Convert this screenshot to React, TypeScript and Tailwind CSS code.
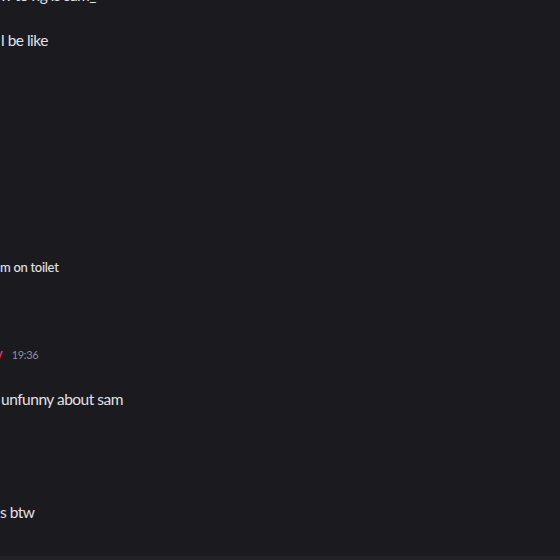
export default function App() {
  return (
    <div className="flex h-[560px] w-[560px] flex-col overflow-hidden bg-[#1b1a1f] font-['Lato',sans-serif] text-[#e0e1e5]">
      <div className="flex-1 overflow-hidden">
        <div className="-mt-4 text-[15.5px] leading-[22px] tracking-[-0.5px] whitespace-nowrap">w to ng is sam_</div>
        <div className="mt-[23px] pl-px text-[15.5px] leading-[22px] tracking-[-0.5px] whitespace-nowrap">l be like</div>
        <div className="mt-[206px] text-[13px] font-medium leading-[20px] tracking-[-0.3px] whitespace-nowrap">m on toilet</div>
        <div className="mt-[68px] flex items-baseline whitespace-nowrap leading-[16px]">
          <span className="-ml-[5px] text-[15px] font-semibold text-[#d23a68]">y</span>
          <span className="ml-[9px] text-[11px] tracking-[-0.4px] text-[#8e9099]">19:36</span>
        </div>
        <div className="mt-[25px] pl-px text-[15.5px] leading-[22px] tracking-[-0.5px] whitespace-nowrap">unfunny about sam</div>
        <div className="mt-[91px] text-[15.5px] leading-[22px] tracking-[-0.5px] whitespace-nowrap">s btw</div>
      </div>
      <div className="h-1 bg-[#222226]" />
    </div>
  );
}
